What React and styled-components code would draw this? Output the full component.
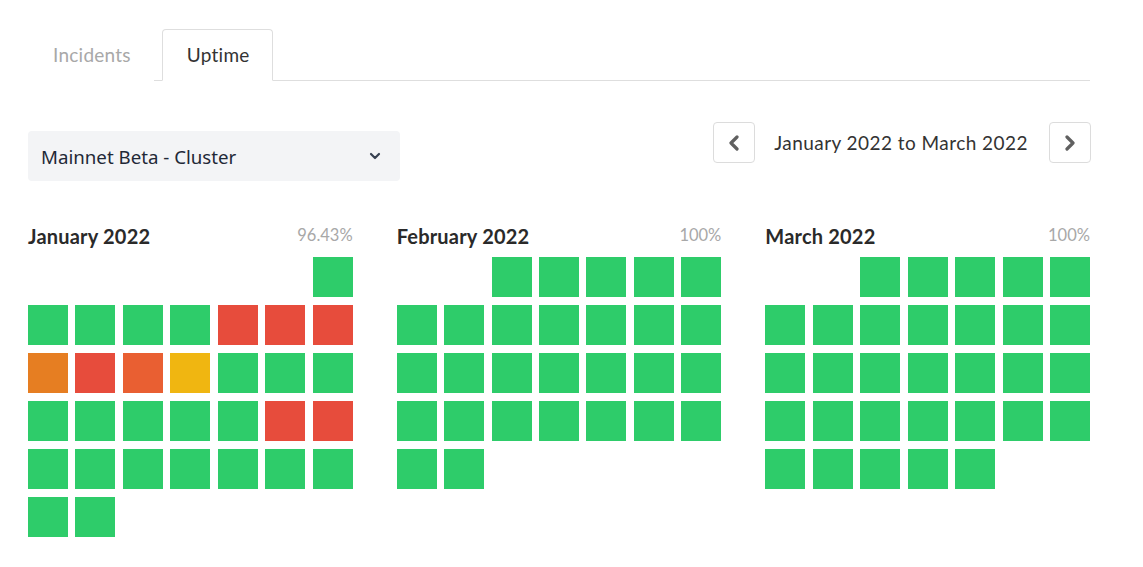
import React from "react";
import styled, { createGlobalStyle } from "styled-components";

const Global = createGlobalStyle`
  html, body { margin: 0; padding: 0; background: #fff; }
  body { font-family: Lato, "Liberation Sans", sans-serif; }
`;

const Page = styled.div`
  width: 1062px;
  padding: 29px 0 0 28px;
`;

const Tabs = styled.div`
  display: flex;
  border-bottom: 1px solid #dedede;
  height: 51px;
`;

const Tab = styled.div`
  box-sizing: border-box;
  height: 52px;
  padding: 0 22px 2px 24px;
  margin-right: 8px;
  display: flex;
  align-items: center;
  font-size: 19px;
  letter-spacing: 0.25px;
  color: ${(p) => (p.$active ? "#333" : "#a8a8a8")};
  border: 1px solid ${(p) => (p.$active ? "#dedede" : "transparent")};
  border-bottom-color: ${(p) => (p.$active ? "#fff" : "transparent")};
  border-radius: 4px 4px 0 0;
  background: #fff;
`;

const Controls = styled.div`
  display: flex;
  justify-content: space-between;
  align-items: flex-start;
  margin-top: 50px;
`;

const Select = styled.div`
  box-sizing: border-box;
  width: 372px;
  height: 50px;
  background: #f3f4f6;
  border-radius: 4px;
  display: flex;
  align-items: center;
  justify-content: space-between;
  padding: 0 19px 0 13px;
  font-family: "Noto Sans", "Open Sans", sans-serif;
  font-size: 18.7px;
  color: #1f2937;
`;

const Nav = styled.div`
  display: flex;
  align-items: center;
  margin-top: -9px;
  margin-right: -1px;
`;

const NavButton = styled.div`
  box-sizing: border-box;
  width: 42px;
  height: 41px;
  border: 1px solid #dcdcdc;
  border-radius: 4px;
  display: flex;
  align-items: center;
  justify-content: center;
`;

const NavText = styled.div`
  font-size: 19px;
  letter-spacing: 0.45px;
  color: #333;
  padding: 0 21px 0 19px;
`;

const Months = styled.div`
  display: grid;
  grid-template-columns: repeat(3, 1fr);
  column-gap: 44px;
  margin-top: 44px;
`;

const Month = styled.div``;

const MonthHead = styled.div`
  display: flex;
  justify-content: space-between;
  align-items: flex-start;
  height: 32px;
`;

const MonthTitle = styled.div`
  font-size: 20px;
  font-weight: 700;
  letter-spacing: 0.2px;
  color: #2a2a2a;
  margin-top: -1px;
`;

const Pct = styled.div`
  font-size: 16.5px;
  color: #a8a8a8;
`;

const Grid = styled.div`
  display: grid;
  grid-template-columns: repeat(7, 40px);
  justify-content: space-between;
  row-gap: 8px;
`;

const colors = {
  g: "#2ecc6a",
  r: "#e74c3c",
  o: "#e67e22",
  x: "#e95f32",
  y: "#f0b611",
};

const Day = styled.div`
  width: 40px;
  height: 40px;
  background: ${(p) => (p.$c ? colors[p.$c] : "transparent")};
`;

const Chevron = ({ dir }) => (
  <svg width="14" height="16" viewBox="0 0 14 16">
    <path
      d={dir === "left" ? "M10 2 L4 8 L10 14" : "M4 2 L10 8 L4 14"}
      fill="none"
      stroke="#606060"
      strokeWidth="3.2"
      strokeLinecap="round"
      strokeLinejoin="round"
    />
  </svg>
);

const SmallChevron = () => (
  <svg width="12" height="8" viewBox="0 0 12 8">
    <path d="M2 2 L6 6 L10 2" fill="none" stroke="#374151" strokeWidth="2.2" strokeLinecap="round" strokeLinejoin="round" />
  </svg>
);

const months = [
  {
    name: "January 2022",
    pct: "96.43%",
    days: [
      "", "", "", "", "", "", "g",
      "g", "g", "g", "g", "r", "r", "r",
      "o", "r", "x", "y", "g", "g", "g",
      "g", "g", "g", "g", "g", "r", "r",
      "g", "g", "g", "g", "g", "g", "g",
      "g", "g",
    ],
  },
  {
    name: "February 2022",
    pct: "100%",
    days: ["", "", ...Array(28).fill("g")],
  },
  {
    name: "March 2022",
    pct: "100%",
    days: ["", "", ...Array(31).fill("g")],
  },
];

export default function App() {
  return (
    <>
      <Global />
      <Page>
        <Tabs>
          <Tab>Incidents</Tab>
          <Tab $active>Uptime</Tab>
        </Tabs>
        <Controls>
          <Select>
            <span>Mainnet Beta - Cluster</span>
            <SmallChevron />
          </Select>
          <Nav>
            <NavButton>
              <Chevron dir="left" />
            </NavButton>
            <NavText>January 2022 to March 2022</NavText>
            <NavButton>
              <Chevron dir="right" />
            </NavButton>
          </Nav>
        </Controls>
        <Months>
          {months.map((m) => (
            <Month key={m.name}>
              <MonthHead>
                <MonthTitle>{m.name}</MonthTitle>
                <Pct>{m.pct}</Pct>
              </MonthHead>
              <Grid>
                {m.days.map((d, i) => (
                  <Day key={i} $c={d} />
                ))}
              </Grid>
            </Month>
          ))}
        </Months>
      </Page>
    </>
  );
}
